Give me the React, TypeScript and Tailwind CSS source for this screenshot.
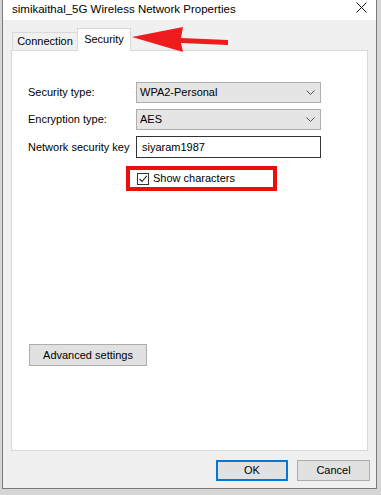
import React from "react";

const font = { fontFamily: '"Liberation Sans", Arial, sans-serif' };

function Chevron() {
  return (
    <svg width="9" height="5" viewBox="0 0 9 5" className="mr-[5px]">
      <path d="M0.5 0.5 L4.5 4.5 L8.5 0.5" fill="none" stroke="#555" strokeWidth="1" />
    </svg>
  );
}

function Select({ value }: { value: string }) {
  return (
    <div className="flex h-[21px] w-[185px] items-center justify-between border border-[#adadad] bg-[#e5e5e5] pl-[3px] text-[11px] text-black">
      <span>{value}</span>
      <Chevron />
    </div>
  );
}

export default function App() {
  return (
    <div className="relative h-[495px] w-[381px] overflow-hidden bg-[#d6d6d6]" style={font}>
      {/* dialog window */}
      <div className="ml-[2px] flex h-[489px] w-[375px] flex-col border-x border-b border-[#7a7a7a] bg-[#f0f0f0]">
        {/* title bar */}
        <div className="flex h-[20px] items-center justify-between bg-white pl-[9px] pr-[9px]">
          <span className="text-[11.5px] text-black">simikaithal_5G Wireless Network Properties</span>
          <svg width="11" height="11" viewBox="0 0 11 11" className="mt-[-6px]">
            <path d="M0.5 0.5 L10.5 10.5 M10.5 0.5 L0.5 10.5" stroke="#111" strokeWidth="1" />
          </svg>
        </div>

        {/* tabs */}
        <div className="mx-[8px] mt-[8px] flex items-end text-[11px] text-black">
          <div className="ml-[1px] flex h-[18px] w-[65px] items-center justify-center border-l border-t border-[#d9d9d9] bg-[#f0f0f0]">
            Connection
          </div>
          <div className="relative z-10 -mb-[1px] flex h-[23px] w-[54px] items-start justify-center border-x border-t border-[#d9d9d9] bg-white pt-[2px]">
            Security
          </div>
        </div>

        {/* tab panel */}
        <div className="mx-[8px] flex h-[401px] flex-col border border-[#d9d9d9] bg-white pl-[16px] pt-[31px] text-[11px] text-black">
          <div className="flex items-center">
            <span className="w-[108px]">Security type:</span>
            <Select value="WPA2-Personal" />
          </div>
          <div className="mt-[6px] flex items-center">
            <span className="w-[108px]">Encryption type:</span>
            <Select value="AES" />
          </div>
          <div className="mt-[6px] flex items-center">
            <span className="w-[108px]">Network security key</span>
            <div className="flex h-[22px] w-[185px] items-center border border-[#333] pl-[5px]">siyaram1987</div>
          </div>

          <div className="ml-[98px] mt-[8px] flex h-[25px] w-[151px] items-center border-4 border-[#ee0d0d] pl-[7px]">
            <div className="flex h-[12px] w-[12px] items-center justify-center border border-[#333] bg-white">
              <svg width="10" height="10" viewBox="0 0 10 10">
                <path d="M1.5 5 L4 7.5 L8.8 1.8" fill="none" stroke="#222" strokeWidth="1.1" />
              </svg>
            </div>
            <span className="ml-[4px]">Show characters</span>
          </div>

          <button className="ml-[1px] mt-[153px] flex h-[22px] w-[118px] items-center justify-center border border-[#adadad] bg-[#e1e1e1] text-[11px] text-black">
            Advanced settings
          </button>
        </div>

        {/* buttons */}
        <div className="mt-[9px] flex justify-end gap-[9px] pr-[6px] text-[11px] text-black">
          <button className="flex h-[21px] w-[72px] items-center justify-center border-2 border-[#0078d7] bg-[#e1e1e1]">OK</button>
          <button className="flex h-[21px] w-[73px] items-center justify-center border border-[#adadad] bg-[#e1e1e1]">Cancel</button>
        </div>
      </div>

      {/* red annotation arrow */}
      <svg className="pointer-events-none absolute left-0 top-0" width="381" height="495">
        <polygon
          points="132,37 183,27 181,38 228,40 228,45 181,43 183,52"
          fill="#ee1c1c"
        />
      </svg>
    </div>
  );
}
